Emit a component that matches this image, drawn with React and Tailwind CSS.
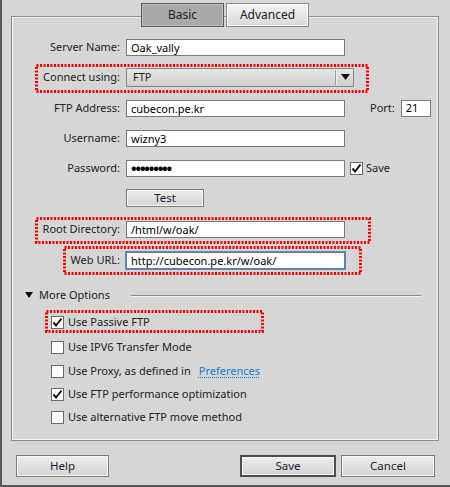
import React from 'react'

const font = { fontFamily: '"Noto Sans", "Liberation Sans", Arial, sans-serif' }

const Input = ({ value, className = '', text = 'text-[11px]' }) => (
  <div className={`h-[17px] w-[219px] bg-white border border-[#7a7a7a] pl-[4px] flex items-center text-black leading-none ${text} ${className}`}>
    {value}
  </div>
)

const Check = ({ checked }) => (
  <div className="w-[13px] h-[13px] bg-white border border-[#6a6a6a] flex items-center justify-center shrink-0">
    {checked && (
      <svg width="11" height="11" viewBox="0 0 11 11">
        <path d="M1.5 5.5 L4 8.5 L9.5 1.5" fill="none" stroke="#111" strokeWidth="2" />
      </svg>
    )}
  </div>
)

const Button = ({ children, primary, className = '' }) => (
  <div
    className={`flex items-center justify-center text-[11.5px] text-[#1c1c36] bg-gradient-to-b from-[#eeeeee] to-[#d3d3d3] shadow-[inset_0_0_0_1px_#f7f7f7] ${primary ? 'border-2 border-[#4e4e4e]' : 'border border-[#7c7c7c]'} ${className}`}
  >
    {children}
  </div>
)

// red dotted annotation boxes drawn over the form
const RedBox = ({ className, w, h }) => (
  <svg className={`absolute pointer-events-none ${className}`} width={w} height={h}>
    <rect x="1.5" y="1.5" width={w - 3} height={h - 3} fill="none" stroke="#ff0000" strokeWidth="3" strokeDasharray="2 1.5" />
  </svg>
)

const Row = ({ label, children, className = 'h-[30px]' }) => (
  <div className={`flex items-center ${className}`}>
    <div className="w-[108px] text-right text-[11px] text-[#222]">{label}</div>
    <div className="ml-[6px] flex items-center">{children}</div>
  </div>
)

const CheckRow = ({ checked, children, className }) => (
  <div className={`flex items-center pl-[39px] ${className}`}>
    <Check checked={checked} />
    <div className="ml-[4px] text-[11px] text-[#222] flex items-center">{children}</div>
  </div>
)

export default function App() {
  return (
    <div style={font} className="w-[450px] h-[487px] bg-[#d6d6d6] border-l-2 border-b-2 border-[#595959] pt-[3px] overflow-hidden">
      <div className="flex ml-[139px] relative z-10 gap-[2px]">
        <div className="w-[83px] h-[24px] flex items-center justify-center text-[12px] text-[#222] bg-[#a9a9a9] border border-[#5e5e5e] shadow-[inset_0_0_0_1px_#bcbcbc]">
          Basic
        </div>
        <div className="w-[83px] h-[24px] flex items-center justify-center text-[12px] text-[#222] bg-gradient-to-b from-[#f2f2f2] to-[#dadada] border border-[#8a8a8a] shadow-[inset_0_0_0_1px_#fafafa]">
          Advanced
        </div>
      </div>

      <div className="relative ml-[9px] -mt-[11px] w-[428px] h-[425px] border border-[#8c8c8c] shadow-[inset_1px_1px_0_#f4f4f4,inset_-1px_-1px_0_#f4f4f4] pt-[15px]">
        <Row label="Server Name:">
          <Input value="Oak_vally" />
        </Row>
        <Row label="Connect using:">
          <div className="h-[19px] w-[228px] border border-[#8a8a8a] bg-gradient-to-b from-[#e6e6e6] to-[#cfcfcf] flex items-center text-[11px] text-[#222]">
            <div className="flex-1 pl-[6px]">FTP</div>
            <div className="w-[1px] h-[15px] bg-[#9c9c9c] border-r border-[#f2f2f2] box-content" />
            <div className="w-[16px] flex items-center justify-center">
              <svg width="9" height="6" viewBox="0 0 9 6"><path d="M0 0 H9 L4.5 6 Z" fill="#111" /></svg>
            </div>
          </div>
        </Row>
        <Row label="FTP Address:" className="h-[30px] mt-[1px]">
          <Input value="cubecon.pe.kr" />
          <div className="ml-[25px] text-[11px] text-[#222]">Port:</div>
          <div className="ml-[6px] h-[17px] w-[30px] bg-white border border-[#7a7a7a] pl-[4px] flex items-center text-[11px] text-black">21</div>
        </Row>
        <Row label="Username:">
          <Input value="wizny3" />
        </Row>
        <Row label="Password:">
          <Input value="•••••••••" text="text-[15px] font-bold tracking-[-1.2px]" />
          <div className="ml-[5px] flex items-center">
            <Check checked />
            <span className="ml-[3px] text-[11px] text-[#222]">Save</span>
          </div>
        </Row>
        <Row label="">
          <Button className="w-[78px] h-[18px]">Test</Button>
        </Row>
        <Row label="Root Directory:" className="h-[30px] mt-[1px]">
          <Input value="/html/w/oak/" />
        </Row>
        <Row label="Web URL:" className="h-[30px] mt-[1px]">
          <Input value="http://cubecon.pe.kr/w/oak/" className="border-[#1e78d4] outline outline-1 outline-[#3b8ee0]" />
        </Row>

        <div className="flex items-center h-[20px] mt-[10px] pl-[13px] pr-[17px]">
          <svg width="8" height="6" viewBox="0 0 8 6"><path d="M0 0 H8 L4 6 Z" fill="#111" /></svg>
          <span className="ml-[6px] text-[11px] text-[#222]">More Options</span>
          <div className="flex-1 ml-[21px] h-[1px] bg-[#8c8c8c] shadow-[0_1px_0_#f2f2f2]" />
        </div>

        <CheckRow checked className="h-[25px] mt-[5px]">Use Passive FTP</CheckRow>
        <CheckRow className="h-[25px]">Use IPV6 Transfer Mode</CheckRow>
        <CheckRow className="h-[23px]">
          Use Proxy, as defined in
          <span className="ml-[8px] text-[#1c7bd6] underline decoration-dotted underline-offset-2">Preferences</span>
        </CheckRow>
        <CheckRow checked className="h-[23px]">Use FTP performance optimization</CheckRow>
        <CheckRow className="h-[22px]">Use alternative FTP move method</CheckRow>

        <RedBox className="left-[23px] top-[47px]" w={334} h={29} />
        <RedBox className="left-[23px] top-[200px]" w={336} h={27} />
        <RedBox className="left-[51px] top-[229px]" w={299} h={29} />
        <RedBox className="left-[33px] top-[293px]" w={219} h={23} />
      </div>

      <div className="flex items-center mt-[14px] pl-[14px] pr-[15px]">
        <Button className="w-[93px] h-[22px]">Help</Button>
        <div className="flex-1" />
        <Button primary className="w-[96px] h-[22px]">Save</Button>
        <Button className="w-[94px] h-[22px] ml-[5px]">Cancel</Button>
      </div>
    </div>
  )
}
